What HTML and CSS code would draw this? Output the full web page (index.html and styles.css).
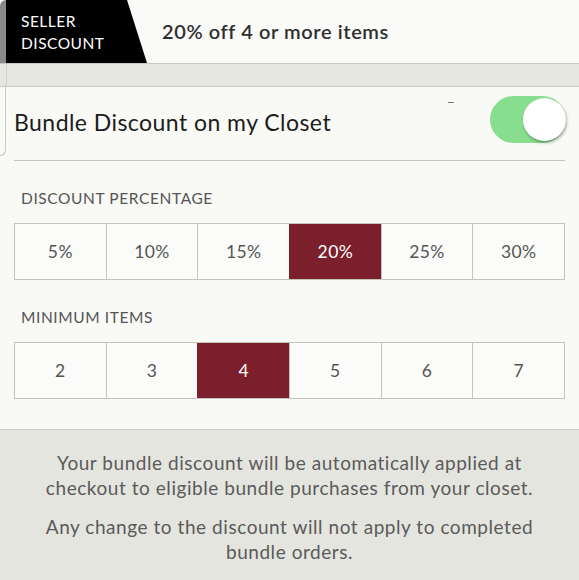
FILE: index.html
```html
<!DOCTYPE html>
<html>
<head>
<meta charset="utf-8">
<link rel="stylesheet" href="styles.css">
</head>
<body>
<div class="page">
  <header class="topbar">
    <div class="edge"></div>
    <div class="tab"><span>SELLER<br>DISCOUNT</span></div>
    <div class="summary">20% off 4 or more items</div>
  </header>
  <div class="band"><div class="band-edge"></div></div>
  <main class="content">
    <div class="side-edge"></div>
    <div class="title-row">
      <h1 class="title">Bundle Discount on my Closet</h1>
      <span class="dash"></span>
      <div class="toggle"><div class="knob"></div></div>
    </div>
    <div class="label">DISCOUNT PERCENTAGE</div>
    <div class="options">
      <div class="opt">5%</div>
      <div class="opt">10%</div>
      <div class="opt">15%</div>
      <div class="opt sel">20%</div>
      <div class="opt">25%</div>
      <div class="opt">30%</div>
    </div>
    <div class="label">MINIMUM ITEMS</div>
    <div class="options">
      <div class="opt">2</div>
      <div class="opt">3</div>
      <div class="opt sel">4</div>
      <div class="opt">5</div>
      <div class="opt">6</div>
      <div class="opt">7</div>
    </div>
  </main>
  <footer class="note">
    <p>Your bundle discount will be automatically applied at<br>checkout to eligible bundle purchases from your closet.</p>
    <p>Any change to the discount will not apply to completed<br>bundle orders.</p>
  </footer>
</div>
</body>
</html>
```

FILE: styles.css
```css
html, body {
  margin: 0;
  padding: 0;
  background: #f9f9f6;
}
body {
  font-family: "Lato", "Open Sans", sans-serif;
  color: #555;
}
.page {
  width: 579px;
  height: 580px;
  overflow: hidden;
  display: flex;
  flex-direction: column;
}
.topbar {
  height: 63px;
  border-bottom: 1px solid #c9c9c2;
  background: #fafaf8;
  display: flex;
  align-items: stretch;
  position: relative;
  flex-shrink: 0;
}
.edge {
  width: 6px;
  background: #8a8a88;
  border-top-left-radius: 6px;
}
.tab {
  width: 141px;
  background: #000;
  clip-path: polygon(0 0, 121px 0, 141px 100%, 0 100%);
  display: flex;
  align-items: center;
  padding-left: 15px;
  box-sizing: border-box;
  color: #fff;
  font-size: 15.5px;
  line-height: 22px;
  letter-spacing: 0.5px;
}
.summary {
  margin-left: 15px;
  display: flex;
  align-items: center;
  font-size: 20px;
  font-weight: 600;
  color: #2e2e2e;
  padding-bottom: 2px;
  letter-spacing: 0.6px;
}
.band {
  height: 22px;
  background: #e7e7e1;
  border-bottom: 1px solid #cbcbc4;
  flex-shrink: 0;
  display: flex;
}
.band-edge {
  width: 6px;
  border-right: 1px solid #d2d2cc;
}
.content {
  position: relative;
  padding: 0 14px 30px;
  border-bottom: 1px solid #cfcfc8;
  flex-shrink: 0;
}
.side-edge {
  position: absolute;
  left: -1px;
  top: -2px;
  width: 6px;
  height: 70px;
  border: 1px solid #c8c8c2;
  border-top: none;
  border-left: none;
  border-bottom-right-radius: 6px;
}
.title-row {
  height: 73px;
  border-bottom: 1px solid #c4c4bc;
  display: flex;
  align-items: center;
  position: relative;
}
.title {
  margin: 0;
  font-weight: 400;
  font-size: 23px;
  letter-spacing: 0.45px;
  color: #1c1c1c;
  flex: 1;
  padding-bottom: 3px;
}
.dash {
  position: absolute;
  left: 434px;
  top: 15px;
  width: 6px;
  height: 1px;
  background: #777;
}
.toggle {
  width: 76px;
  height: 47px;
  border-radius: 24px;
  background: #88dd8e;
  margin-top: -8px;
  margin-right: -1px;
  position: relative;
}
.knob {
  position: absolute;
  right: 0;
  top: 2px;
  width: 43px;
  height: 43px;
  border-radius: 50%;
  background: #fff;
  box-shadow: 1px 2px 3px rgba(0,0,0,0.3);
}
.label {
  padding-left: 7px;
  font-size: 15.5px;
  line-height: 20px;
  letter-spacing: 0.6px;
  margin-top: 27px;
  margin-bottom: 15px;
  color: #555;
}
.options {
  display: flex;
  border: 1px solid #c4c4bc;
  height: 55px;
}
.opt {
  flex: 1;
  display: flex;
  align-items: center;
  justify-content: center;
  border-left: 1px solid #c4c4bc;
  font-size: 17.5px;
  letter-spacing: 0.4px;
  color: #555;
  background: #fbfbf9;
}
.opt:first-child {
  border-left: none;
}
.opt.sel {
  background: #7b1f2d;
  color: #fff;
  border-left-color: #7b1f2d;
}
.note {
  flex: 1;
  background: #e5e5df;
  text-align: center;
  font-size: 19px;
  line-height: 25px;
  letter-spacing: 0.55px;
  color: #5a5a5a;
  padding-top: 20px;
}
.note p {
  margin: 0 0 14px;
}
```
